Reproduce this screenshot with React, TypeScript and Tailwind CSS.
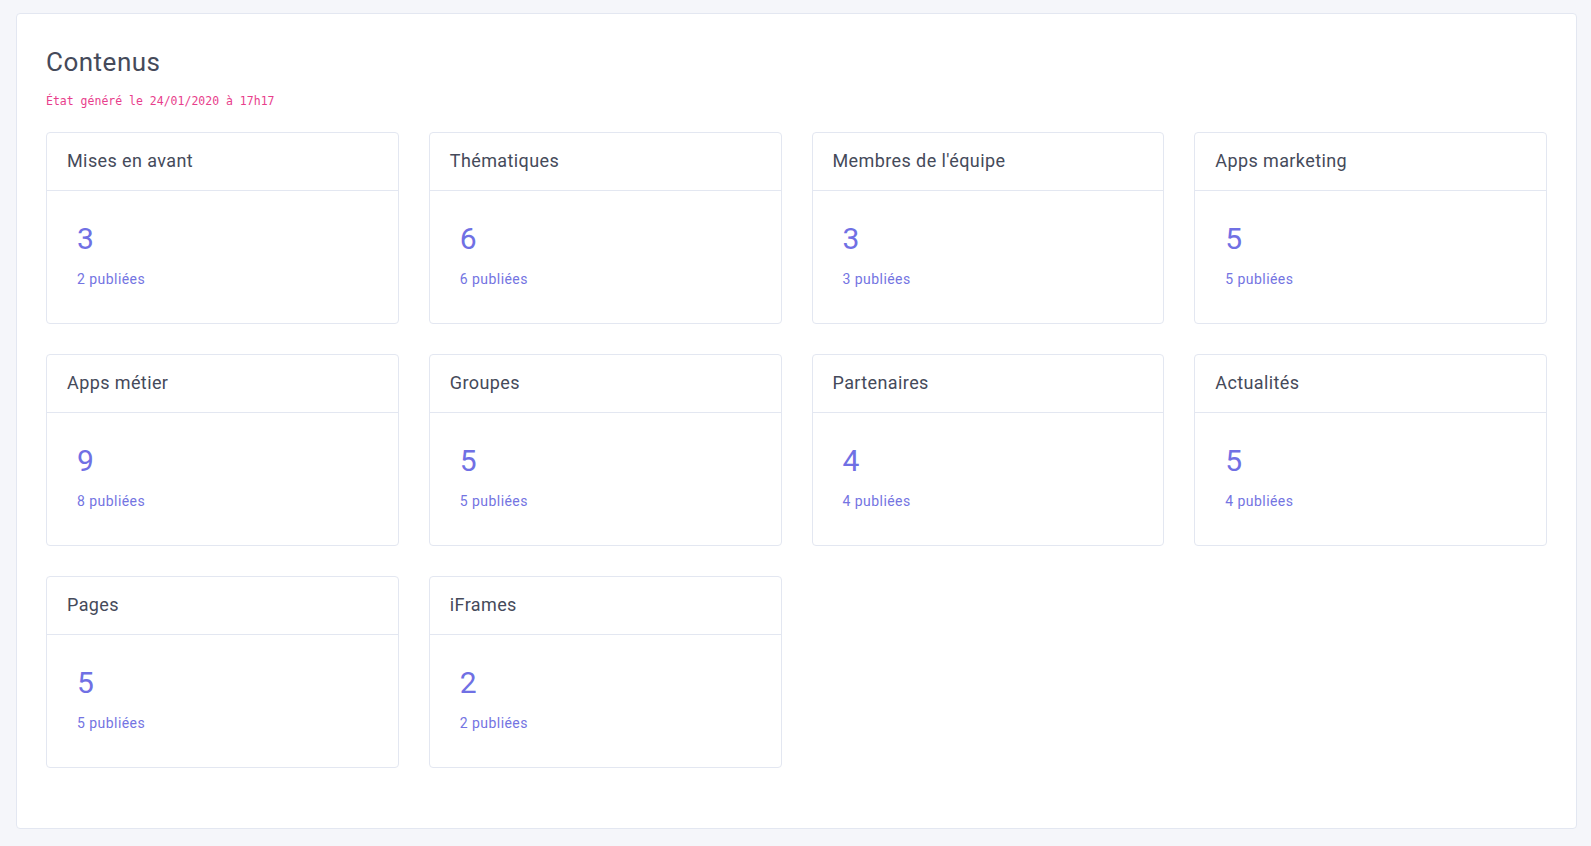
import React from "react";

const CONTENTS = [
  { name: "Mises en avant", total: 3, published: 2 },
  { name: "Thématiques", total: 6, published: 6 },
  { name: "Membres de l'équipe", total: 3, published: 3 },
  { name: "Apps marketing", total: 5, published: 5 },
  { name: "Apps métier", total: 9, published: 8 },
  { name: "Groupes", total: 5, published: 5 },
  { name: "Partenaires", total: 4, published: 4 },
  { name: "Actualités", total: 5, published: 4 },
  { name: "Pages", total: 5, published: 5 },
  { name: "iFrames", total: 2, published: 2 },
];

function StatCard({ name, total, published }: { name: string; total: number; published: number }) {
  return (
    <div className="bg-white border border-[#e3e7f1] rounded-[4px]">
      <div className="px-5 pt-[14px] pb-[16px] border-b border-[#e3e7f1] text-[18px] leading-[27px] text-[#454a5a] tracking-[0.4px]">
        {name}
      </div>
      <div className="pl-[30px] pt-[30px] pb-[33px]">
        <div className="text-[30px] leading-[36px] text-[#7070e4]">{total}</div>
        <div className="mt-3 text-[14px] leading-[21px] text-[#7474e2] tracking-[0.45px]">
          {published} publiées
        </div>
      </div>
    </div>
  );
}

export default function App() {
  return (
    <div
      className="min-h-[846px] bg-[#f5f6fa] pt-[13px] pb-[18px] pl-4 pr-[14px]"
      style={{ fontFamily: "Roboto, 'Noto Sans', sans-serif" }}
    >
      <div className="bg-white border border-[#e3e7f1] rounded-[4px] px-[29px] pt-[33px] pb-[60px]">
        <h1 className="text-[26px] leading-[31px] text-[#454a5a] font-normal tracking-[0.5px]">Contenus</h1>
        <code
          className="block mt-[16px] text-[11.5px] leading-[14px] text-[#e83e8c]"
          style={{ fontFamily: "'DejaVu Sans Mono', 'Liberation Mono', monospace" }}
        >
          État généré le 24/01/2020 à 17h17
        </code>
        <div className="mt-[24px] grid grid-cols-4 gap-x-[30px] gap-y-[30px]">
          {CONTENTS.map((c) => (
            <StatCard key={c.name} {...c} />
          ))}
        </div>
      </div>
    </div>
  );
}
